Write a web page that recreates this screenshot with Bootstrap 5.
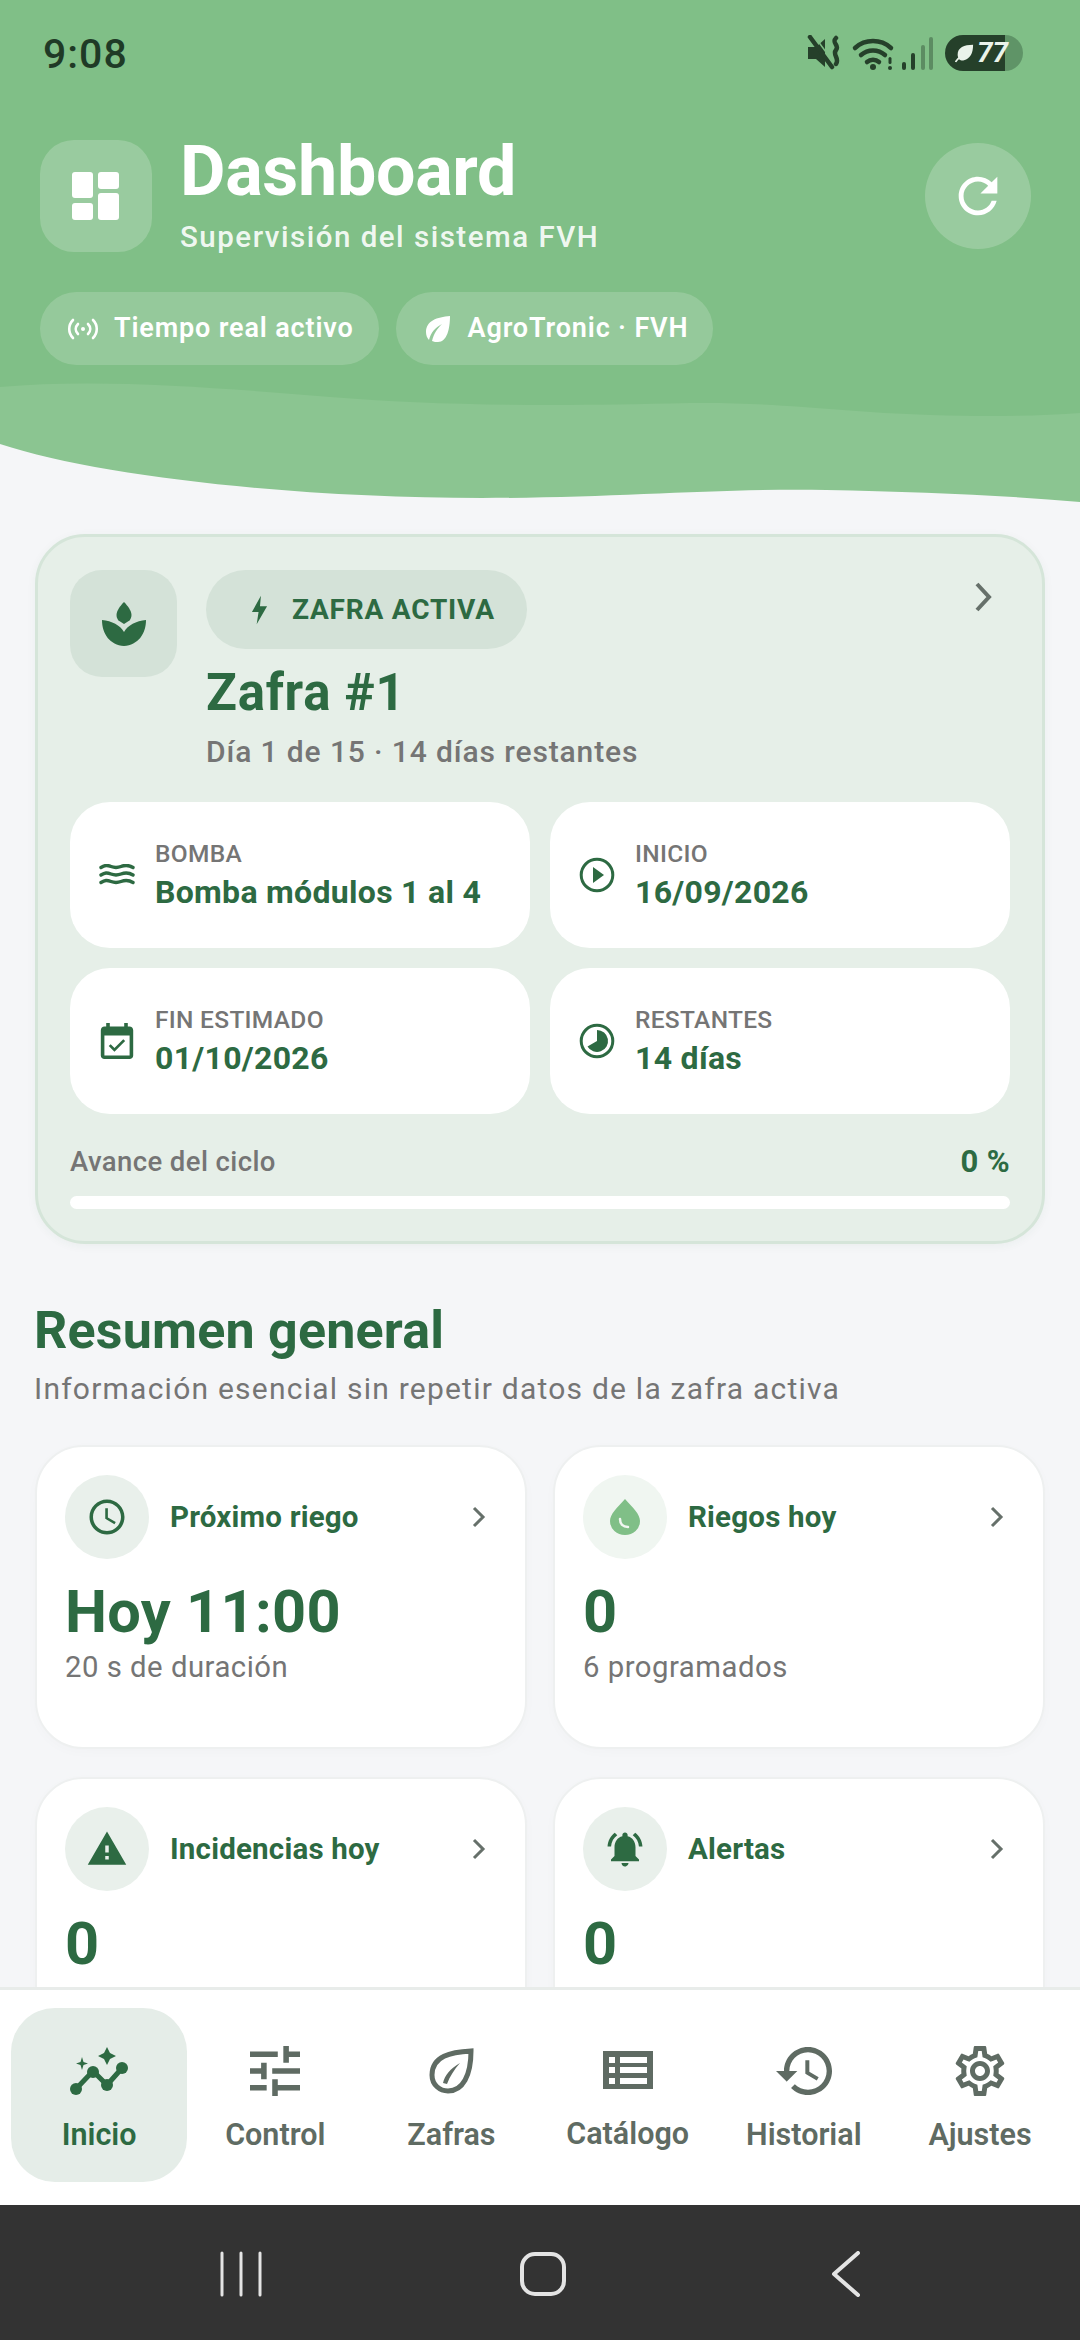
<!DOCTYPE html>
<html lang="es">
<head>
    <meta charset="UTF-8">
    <title>Dashboard</title>
    <link href="https://cdn.jsdelivr.net/npm/bootstrap@5.3.0/dist/css/bootstrap.min.css" rel="stylesheet">
    <style>
        body { font-family: Roboto, "Liberation Sans", sans-serif; background: #f5f6f8; width: 1080px; height: 2340px; overflow: hidden; }
        svg { display: block; flex-shrink: 0; }
        .phone { height: 2340px; }

        /* cabecera */
        .top-head { background: #80bf87; }
        .status-line { height: 104px; padding: 33px 57px 0 43px; color: #1f3a26; }
        .status-time { font-size: 41px; font-weight: 500; line-height: 42px; letter-spacing: 1px; }
        .status-icons { margin-top: 2px; }
        .batt { width: 78px; height: 36px; border-radius: 18px; background: linear-gradient(90deg, #25402a 77%, #5f9467 77%); color: #eaf3ea; font-size: 28px; font-weight: 700; line-height: 36px; padding-left: 9px; font-style: italic; gap: 3px; }
        .head-main { padding: 36px 49px 0 40px; }
        .logo-box { width: 112px; height: 112px; border-radius: 34px; background: rgba(255,255,255,.2); margin-right: 28px; }
        .head-title { font-size: 70px; font-weight: 700; line-height: 68px; color: #fff; margin: -3px 0 0; letter-spacing: -.3px; }
        .head-sub { font-size: 29.5px; line-height: 30px; color: rgba(255,255,255,.9); letter-spacing: 1.5px; font-weight: 500; margin-top: 17px; }
        .reload-btn { width: 106px; height: 106px; border-radius: 50%; background: rgba(255,255,255,.2); margin-top: 3px; }
        .head-chips { padding: 40px 40px 0; gap: 17px; }
        .chip-soft { height: 73px; border-radius: 37px; background: rgba(255,255,255,.17); color: #fff; font-size: 27px; font-weight: 600; letter-spacing: .85px; padding: 0 25px 0 27px; gap: 15px; }
        .wave { margin-top: 15px; width: 1080px; height: 125px; }

        /* zafra */
        .page-body { padding: 29px 35px 0 35px; min-height: 0; }
        .zafra-box { background: #e6efe8; border: 3px solid #d5e5d9; border-radius: 50px; padding: 33px 32px 0; height: 710px; box-shadow: 0 2px 10px rgba(45,106,66,.05); }
        .z-icon { width: 107px; height: 107px; border-radius: 32px; background: #d4e2d8; margin-right: 29px; }
        .z-pill { height: 79px; width: 321px; border-radius: 40px; background: #d4e2d8; color: #2d6a42; font-size: 28px; font-weight: 700; letter-spacing: .8px; padding-left: 45px; gap: 24px; }
        .z-name { font-size: 51px; font-weight: 700; line-height: 58px; color: #2d6a42; margin: 15px 0 0; letter-spacing: .7px; }
        .z-days { font-size: 30px; line-height: 34px; color: #757575; letter-spacing: .88px; margin-top: 13px; font-weight: 500; }
        .z-chev { margin: 11px 17px 0 auto; }
        .stat-row { --bs-gutter-x: 20px; --bs-gutter-y: 20px; margin-top: 13px; }
        .stat-tile { background: #fff; border-radius: 40px; height: 146px; padding: 0 0 0 29px; gap: 20px; }
        .stat-label { font-size: 24.5px; font-weight: 500; color: #757575; line-height: 28px; letter-spacing: .3px; }
        .stat-val { font-size: 32px; font-weight: 700; color: #2d6a42; line-height: 38px; letter-spacing: .3px; margin-top: 5px; }
        .prog-head { margin-top: 31px; color: #757575; font-size: 27.5px; font-weight: 500; line-height: 34px; letter-spacing: .4px; }
        .prog-pct { color: #2d6a42; font-weight: 700; font-size: 31px; }
        .prog-bar { height: 13px; background: #fff; border-radius: 7px; margin-top: 17px; }

        /* resumen */
        .sec-title { font-size: 52px; font-weight: 700; line-height: 60px; color: #2d6a42; margin: 57px 0 0 -1px; letter-spacing: .2px; }
        .sec-sub { font-size: 30px; line-height: 36px; color: #757575; letter-spacing: 1.23px; margin: 10px 0 0 -1px; }
        .sum-row { --bs-gutter-x: 26px; --bs-gutter-y: 28px; margin-top: 10px; }
        .sum-card { background: #fff; border: 2px solid #eef0f0; border-radius: 48px; height: 304px; padding: 28px 39px 0 28px; box-shadow: 0 3px 12px rgba(0,0,0,.02); }
        .sum-ico { width: 84px; height: 84px; border-radius: 50%; background: #e9f0eb; margin-right: 21px; }
        .sum-ico.soft { background: #f0f6f1; }
        .sum-name { font-size: 29.5px; font-weight: 700; color: #2d6a42; letter-spacing: .2px; }
        .sum-val { font-size: 59.5px; font-weight: 700; line-height: 66px; color: #2d6a42; margin-top: 20px; letter-spacing: .3px; }
        .sum-note { font-size: 29.3px; line-height: 34px; color: #757575; letter-spacing: .5px; margin-top: 5px; }

        /* barra inferior */
        .tab-strip { height: 218px; background: #fff; border-top: 3px solid #e8ecea; padding: 18px 2px 0 11px; }
        .tab-item { width: 176.2px; height: 174px; border-radius: 44px; color: #5f6b63; font-size: 30.5px; font-weight: 600; line-height: 34px; text-decoration: none; padding-top: 8px; }
        .tab-item.on { background: #e5ede8; color: #2d6a42; }
        .tab-item span { margin-top: 22px; }
        .sys-bar { height: 135px; background: #333; padding-top: 2px; }
    </style>
</head>
<body>
<div class="phone d-flex flex-column">
    <header class="top-head flex-shrink-0">
        <div class="status-line d-flex justify-content-between">
            <div class="status-time">9:08</div>
            <div class="status-icons d-flex align-items-start">
                <svg width="130" height="36" viewBox="0 0 130 36" fill="#25402a">
                    <path d="M1 12h8l9-8v28l-9-8H1z"/>
                    <path d="M3 2l22 30" stroke="#25402a" stroke-width="4.500" stroke-linecap="round"/>
                    <path d="M3 2l22 30" stroke="#80bf87" stroke-width="1.500" transform="translate(3.500 -2)"/>
                    <path d="M29 3c-5 5 4 7 0 12s4 8 0 14" fill="none" stroke="#25402a" stroke-width="4.500" stroke-linecap="round"/>
                    <path d="M48 13a27 27 0 0 1 36 0M54 20a18 18 0 0 1 24 0M60 27a9 9 0 0 1 12 0" fill="none" stroke="#25402a" stroke-width="4.500" stroke-linecap="round"/>
                    <circle cx="66" cy="32" r="3"/>
                    <rect x="81.500" y="22" width="3" height="7" rx="1.500"/><circle cx="83" cy="33" r="2"/>
                    <rect x="95" y="27" width="4" height="8" rx="2"/>
                    <rect x="104" y="18" width="4" height="17" rx="2"/>
                    <rect x="114" y="10" width="4" height="25" rx="2" opacity=".4"/>
                    <rect x="122" y="2" width="4" height="33" rx="2" opacity=".4"/>
                </svg>
                <div class="batt d-flex ms-2">
                    <svg class="align-self-center" width="20" height="20" viewBox="0 0 22 22" fill="#eaf3ea"><path d="M21 2C11 2 4 5 4 13c0 1 .2 2 .6 3C2.500 18 1.500 19.500 1 20.500l1.500.8c.6-1 1.500-2.200 3-3.500C7 19 9 19.500 11 19c7-1.500 10-8 10-17z"/></svg>
                    <span>77</span>
                </div>
            </div>
        </div>
        <div class="head-main d-flex align-items-start">
            <div class="logo-box d-flex align-items-center justify-content-center">
                <svg width="48" height="48" viewBox="0 0 48 48" fill="#fff">
                    <rect x="0" y="0" width="21" height="26" rx="3"/><rect x="0" y="31" width="21" height="17" rx="3"/>
                    <rect x="26" y="0" width="21" height="17" rx="3"/><rect x="26" y="21" width="21" height="27" rx="3"/>
                </svg>
            </div>
            <div class="flex-grow-1">
                <h1 class="head-title">Dashboard</h1>
                <div class="head-sub">Supervisión del sistema FVH</div>
            </div>
            <div class="reload-btn d-flex align-items-center justify-content-center">
                <svg width="58" height="58" viewBox="0 0 24 24" fill="#fff"><path d="M17.65 6.35C16.2 4.9 14.21 4 12 4c-4.42 0-7.99 3.58-7.99 8s3.57 8 7.99 8c3.73 0 6.84-2.55 7.73-6h-2.08c-.82 2.33-3.04 4-5.65 4-3.31 0-6-2.69-6-6s2.69-6 6-6c1.66 0 3.14.69 4.22 1.78L13 11h7V4l-2.35 2.35z"/></svg>
            </div>
        </div>
        <div class="head-chips d-flex">
            <div class="chip-soft d-flex align-items-center">
                <svg width="32" height="24" viewBox="0 0 32 24" fill="none" stroke="#fff" stroke-width="2.600" stroke-linecap="round"><path d="M6 3C1 8 1 16 6 21M26 3c5 5 5 13 0 18M11 7c-3 3-3 7 0 10M21 7c3 3 3 7 0 10"/><circle cx="16" cy="12" r="2" fill="#fff" stroke="none"/></svg>
                <span>Tiempo real activo</span>
            </div>
            <div class="chip-soft d-flex align-items-center">
                <svg width="30" height="28" viewBox="0 0 30 28" fill="#fff"><path d="M27 1C14 2 3 6 3 17c0 3 1 6 3 8 2-8 6-12 13-16-5 5-8 9-10 17 2 1 4 1 6 1C24 27 27 14 27 1z"/></svg>
                <span>AgroTronic · FVH</span>
            </div>
        </div>
        <svg class="wave" viewBox="0 0 1080 125" preserveAspectRatio="none">
            <path fill="#8bc591" d="M0 7C100 -2 220 8 330 17C430 25 540 27 690 23C780 22 840 32 930 35C990 37 1040 36 1080 33V125H0Z"/>
            <path fill="#f5f6f8" d="M0 64C100 97 300 118 482 118C620 118 720 108 826 110C920 112 1000 115 1080 122V125H0Z"/>
        </svg>
    </header>

    <main class="page-body flex-grow-1 overflow-hidden">
        <section class="zafra-box">
            <div class="d-flex align-items-start">
                <div class="z-icon d-flex align-items-center justify-content-center">
                    <svg width="44" height="44" viewBox="0 0 44 44" fill="#2d6a42">
                        <path d="M22 0c4 4 7.500 9 7.500 13 0 2-.8 4-2 5.500L22 22l-5.500-3.500c-1.200-1.500-2-3.500-2-5.500 0-4 3.500-9 7.500-13z"/>
                        <path d="M0 18c10 1 18 5 22 12 4-7 12-11 22-12 0 14-8 25-22 26C8 43 0 32 0 18z"/>
                    </svg>
                </div>
                <div class="flex-grow-1">
                    <div class="z-pill d-flex align-items-center">
                        <svg width="17" height="30" viewBox="0 0 18 30" fill="#2d6a42"><path d="M10.500 0 1 17h7L6 30l11-19H9.500z"/></svg>
                        <span>ZAFRA ACTIVA</span>
                    </div>
                    <h2 class="z-name">Zafra #1</h2>
                    <div class="z-days">Día 1 de 15 · 14 días restantes</div>
                </div>
                <svg class="z-chev" width="20" height="32" viewBox="0 0 20 32" fill="none" stroke="#66706a" stroke-width="4"><path d="M4 3l12 13L4 29"/></svg>
            </div>

            <div class="row stat-row">
                <div class="col-6">
                    <div class="stat-tile d-flex align-items-center">
                        <svg width="36" height="22" viewBox="0 0 36 22" fill="none" stroke="#2d6a42" stroke-width="3.400" stroke-linecap="round"><path d="M2 3.500c4-2.500 6-2.500 10-1s6 1.500 10 0 8-1.500 12 1M2 11c4-2.500 6-2.500 10-1s6 1.500 10 0 8-1.500 12 1M2 18.500c4-2.500 6-2.500 10-1s6 1.500 10 0 8-1.500 12 1"/></svg>
                        <div>
                            <div class="stat-label">BOMBA</div>
                            <div class="stat-val">Bomba módulos 1 al 4</div>
                        </div>
                    </div>
                </div>
                <div class="col-6">
                    <div class="stat-tile d-flex align-items-center">
                        <svg width="36" height="36" viewBox="0 0 36 36" fill="#2d6a42"><circle cx="18" cy="18" r="15.800" fill="none" stroke="#2d6a42" stroke-width="3"/><path d="M14 10l11 8-11 8z"/></svg>
                        <div>
                            <div class="stat-label">INICIO</div>
                            <div class="stat-val">16/09/2026</div>
                        </div>
                    </div>
                </div>
                <div class="col-6">
                    <div class="stat-tile d-flex align-items-center">
                        <svg width="36" height="36" viewBox="3 1 18 20" fill="#2d6a42"><path d="M16.530 11.060 15.470 10l-4.880 4.880-2.120-2.120-1.060 1.060L10.590 17l5.940-5.940zM19 3h-1V1h-2v2H8V1H6v2H5c-1.110 0-1.990.9-1.990 2L3 19c0 1.100.89 2 2 2h14c1.100 0 2-.9 2-2V5c0-1.100-.9-2-2-2zm0 16H5V8h14v11z"/></svg>
                        <div>
                            <div class="stat-label">FIN ESTIMADO</div>
                            <div class="stat-val">01/10/2026</div>
                        </div>
                    </div>
                </div>
                <div class="col-6">
                    <div class="stat-tile d-flex align-items-center">
                        <svg width="36" height="36" viewBox="0 0 36 36" fill="#2d6a42"><circle cx="18" cy="18" r="15.800" fill="none" stroke="#2d6a42" stroke-width="3"/><path d="M18 7a11 11 0 1 1-9.500 16.500L18 18z"/></svg>
                        <div>
                            <div class="stat-label">RESTANTES</div>
                            <div class="stat-val">14 días</div>
                        </div>
                    </div>
                </div>
            </div>

            <div class="prog-head d-flex justify-content-between align-items-center">
                <span>Avance del ciclo</span>
                <span class="prog-pct">0 %</span>
            </div>
            <div class="prog-bar"></div>
        </section>

        <h2 class="sec-title">Resumen general</h2>
        <div class="sec-sub">Información esencial sin repetir datos de la zafra activa</div>

        <div class="row sum-row">
            <div class="col-6">
                <div class="sum-card">
                    <div class="d-flex align-items-center">
                        <div class="sum-ico d-flex align-items-center justify-content-center">
                            <svg width="42" height="42" viewBox="0 0 24 24" fill="#2d6a42"><path d="M11.990 2C6.470 2 2 6.480 2 12s4.470 10 9.990 10C17.520 22 22 17.520 22 12S17.520 2 11.990 2zM12 20c-4.420 0-8-3.580-8-8s3.580-8 8-8 8 3.580 8 8-3.580 8-8 8zm.5-13H11v6l5.250 3.150.75-1.230-4.500-2.670z"/></svg>
                        </div>
                        <div class="sum-name flex-grow-1">Próximo riego</div>
                        <svg width="14" height="22" viewBox="0 0 14 22" fill="none" stroke="#66706a" stroke-width="3"><path d="M2 2l9 9-9 9"/></svg>
                    </div>
                    <div class="sum-val">Hoy 11:00</div>
                    <div class="sum-note">20 s de duración</div>
                </div>
            </div>
            <div class="col-6">
                <div class="sum-card">
                    <div class="d-flex align-items-center">
                        <div class="sum-ico soft d-flex align-items-center justify-content-center">
                            <svg width="30" height="36" viewBox="0 0 30 36"><path fill="#80bf87" d="M15 0c8 9 15 15 15 22a15 14 0 0 1-30 0C0 15 7 9 15 0z"/><path fill="none" stroke="#f0f6f1" stroke-width="2.500" stroke-linecap="round" d="M10 20c0 5 3 8 8 8"/></svg>
                        </div>
                        <div class="sum-name flex-grow-1">Riegos hoy</div>
                        <svg width="14" height="22" viewBox="0 0 14 22" fill="none" stroke="#66706a" stroke-width="3"><path d="M2 2l9 9-9 9"/></svg>
                    </div>
                    <div class="sum-val">0</div>
                    <div class="sum-note">6 programados</div>
                </div>
            </div>
            <div class="col-6">
                <div class="sum-card">
                    <div class="d-flex align-items-center">
                        <div class="sum-ico d-flex align-items-center justify-content-center">
                            <svg width="42" height="42" viewBox="0 0 24 24" fill="#2d6a42"><path d="M1 21h22L12 2 1 21zm12-3h-2v-2h2v2zm0-4h-2v-4h2v4z"/></svg>
                        </div>
                        <div class="sum-name flex-grow-1">Incidencias hoy</div>
                        <svg width="14" height="22" viewBox="0 0 14 22" fill="none" stroke="#66706a" stroke-width="3"><path d="M2 2l9 9-9 9"/></svg>
                    </div>
                    <div class="sum-val">0</div>
                </div>
            </div>
            <div class="col-6">
                <div class="sum-card">
                    <div class="d-flex align-items-center">
                        <div class="sum-ico d-flex align-items-center justify-content-center">
                            <svg width="42" height="42" viewBox="0 0 24 24" fill="#2d6a42"><path d="M7.580 4.080 6.150 2.650C3.750 4.480 2.170 7.300 2.030 10.500h2c.15-2.650 1.510-4.970 3.550-6.420zm12.390 6.420h2c-.15-3.200-1.730-6.020-4.120-7.850l-1.420 1.430c2.020 1.450 3.390 3.770 3.540 6.420zM18 11c0-3.070-1.640-5.640-4.500-6.320V4c0-.83-.67-1.500-1.500-1.500s-1.500.67-1.500 1.500v.68C7.630 5.360 6 7.920 6 11v5l-2 2v1h16v-1l-2-2v-5zm-6 11c.14 0 .27-.01.4-.04.65-.14 1.180-.58 1.440-1.180.1-.24.15-.5.15-.78h-4c.01 1.100.9 2 2.010 2z"/></svg>
                        </div>
                        <div class="sum-name flex-grow-1">Alertas</div>
                        <svg width="14" height="22" viewBox="0 0 14 22" fill="none" stroke="#66706a" stroke-width="3"><path d="M2 2l9 9-9 9"/></svg>
                    </div>
                    <div class="sum-val">0</div>
                </div>
            </div>
        </div>
    </main>

    <nav class="tab-strip d-flex flex-shrink-0">
        <a class="tab-item on d-flex flex-column align-items-center justify-content-center" href="#">
            <svg width="60" height="50" viewBox="0 0 60 50" fill="#2d6a42">
                <path d="M6 44 24 25l14 14 16-18" fill="none" stroke="#2d6a42" stroke-width="5"/>
                <circle cx="7" cy="43" r="6"/><circle cx="24" cy="26" r="6"/><circle cx="38" cy="39" r="6"/><circle cx="53" cy="22" r="6"/>
                <path d="M38 1l3 6 6 3-6 3-3 6-3-6-6-3 6-3zM13 11l1.500 5 4.500 1.500-4.500 1.500-1.500 5-1.500-5-4.500-1.500 4.500-1.500z"/>
            </svg>
            <span>Inicio</span>
        </a>
        <a class="tab-item d-flex flex-column align-items-center justify-content-center" href="#">
            <svg width="50" height="50" viewBox="3 3 18 18" fill="#5f6b63"><path d="M3 17v2h6v-2H3zM3 5v2h10V5H3zm10 16v-2h8v-2h-8v-2h-2v6h2zM7 9v2H3v2h4v2h2V9H7zm14 4v-2H11v2h10zm-6-4h2V7h4V5h-4V3h-2v6z"/></svg>
            <span>Control</span>
        </a>
        <a class="tab-item d-flex flex-column align-items-center justify-content-center" href="#">
            <svg width="50" height="50" viewBox="0 0 50 50" fill="none" stroke="#5f6b63" stroke-width="5"><path d="M45 5C25 6 6 10 6 29c0 10 8 16 16 16 15 0 23-16 23-40z"/><path d="M17 37c2-8 7-14 17-20-6 7-10 13-13 21z" fill="#5f6b63" stroke="none"/></svg>
            <span>Zafras</span>
        </a>
        <a class="tab-item d-flex flex-column align-items-center justify-content-center" href="#">
            <svg width="50" height="40" viewBox="0 0 50 40" fill="#5f6b63" fill-rule="evenodd" class="my-1"><path d="M0 0h50v38H0zM6 6v6h6V6zm11 0v6h27V6zM6 16v6h6v-6zm11 0v6h27v-6zM6 27v6h6v-6zm11 0v6h27v-6z"/></svg>
            <span>Catálogo</span>
        </a>
        <a class="tab-item d-flex flex-column align-items-center justify-content-center" href="#">
            <svg width="56" height="50" viewBox="1 3 21 18" fill="#5f6b63"><path d="M13 3c-4.970 0-9 4.030-9 9H1l3.890 3.890.07.14L9 12H6c0-3.870 3.130-7 7-7s7 3.130 7 7-3.130 7-7 7c-1.930 0-3.680-.79-4.940-2.060l-1.420 1.420C8.270 19.990 10.510 21 13 21c4.970 0 9-4.030 9-9s-4.030-9-9-9zm-1 5v5l4.280 2.540.72-1.210-3.500-2.080V8H12z"/></svg>
            <span>Historial</span>
        </a>
        <a class="tab-item d-flex flex-column align-items-center justify-content-center" href="#">
            <svg width="54" height="50" viewBox="2 2 20 20" fill="#5f6b63"><path d="M19.430 12.980c.04-.32.07-.64.07-.98 0-.34-.03-.66-.07-.98l2.110-1.650c.19-.15.24-.42.12-.64l-2-3.460c-.09-.16-.26-.25-.44-.25-.06 0-.12.01-.17.03l-2.490 1c-.52-.4-1.080-.73-1.690-.98l-.38-2.650C14.460 2.180 14.250 2 14 2h-4c-.25 0-.46.18-.49.42l-.38 2.650c-.61.25-1.170.59-1.690.98l-2.490-1c-.06-.02-.12-.03-.18-.03-.17 0-.34.09-.43.25l-2 3.460c-.13.22-.07.49.12.64l2.110 1.650c-.04.32-.07.65-.07.98 0 .33.03.66.07.98l-2.110 1.650c-.19.15-.24.42-.12.64l2 3.460c.09.16.26.25.44.25.06 0 .12-.01.17-.03l2.490-1c.52.4 1.080.73 1.690.98l.38 2.650c.03.24.24.42.49.42h4c.25 0 .46-.18.49-.42l.38-2.650c.61-.25 1.170-.59 1.690-.98l2.490 1c.06.02.12.03.18.03.17 0 .34-.09.43-.25l2-3.460c.12-.22.07-.49-.12-.64l-2.110-1.650zm-1.980-1.710c.04.31.05.52.05.73 0 .21-.02.43-.05.73l-.14 1.130.89.7 1.080.84-.7 1.210-1.270-.51-1.040-.42-.9.68c-.43.32-.84.56-1.250.73l-1.060.43-.16 1.130-.2 1.350h-1.400l-.19-1.350-.16-1.130-1.060-.43c-.43-.18-.83-.41-1.230-.71l-.91-.7-1.060.43-1.270.51-.7-1.210 1.080-.84.89-.7-.14-1.130c-.03-.31-.05-.54-.05-.74s.02-.43.05-.73l.14-1.130-.89-.7-1.080-.84.7-1.210 1.270.51 1.040.42.9-.68c.43-.32.84-.56 1.250-.73l1.060-.43.16-1.130.2-1.350h1.390l.19 1.350.16 1.130 1.060.43c.43.18.83.41 1.230.71l.91.7 1.060-.43 1.270-.51.7 1.210-1.070.85-.89.7.14 1.130zM12 8c-2.210 0-4 1.790-4 4s1.790 4 4 4 4-1.790 4-4-1.790-4-4-4zm0 6c-1.100 0-2-.9-2-2s.9-2 2-2 2 .9 2 2-.9 2-2 2z"/></svg>
            <span>Ajustes</span>
        </a>
    </nav>

    <div class="sys-bar d-flex flex-shrink-0 align-items-center">
        <svg width="1080" height="46" viewBox="0 0 1080 46" fill="none" stroke="#e4e4e4">
            <path d="M222 2v42M241 2v42M260 2v42" stroke-width="3" stroke-linecap="round"/>
            <rect x="522" y="3" width="42" height="40" rx="13" stroke-width="4"/>
            <path d="M858 2 834 23l24 21" stroke-width="4" stroke-linecap="round" stroke-linejoin="round"/>
        </svg>
    </div>
</div>
</body>
</html>
